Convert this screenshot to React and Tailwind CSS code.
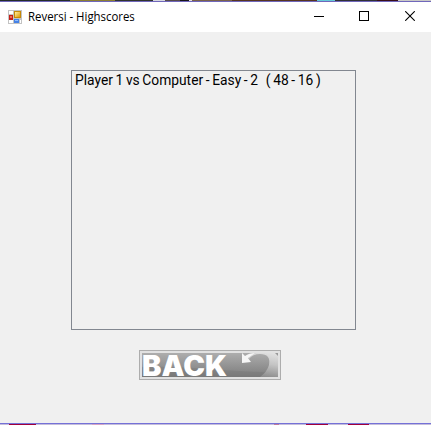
import React from "react";

function AppIcon() {
  return (
    <svg width="14" height="14" viewBox="0 0 14 14" shapeRendering="crispEdges">
      <defs>
        <linearGradient id="gold" x1="0" y1="0" x2="1" y2="1">
          <stop offset="0" stopColor="#fff0a0" />
          <stop offset="1" stopColor="#dc9a08" />
        </linearGradient>
      </defs>
      <rect width="14" height="14" fill="#c3c3c3" />
      <path d="M1 1h4v3H1zM1 10h4v3H1zM12 10h1v3h-1z" fill="#fff" />
      <rect x="1" y="5" width="4" height="5" fill="#c41f18" />
      <rect x="2" y="6" width="2" height="2" fill="#ef6a58" />
      <rect x="6" y="1" width="7" height="7" fill="#c68a08" />
      <rect x="7" y="2" width="5" height="5" fill="url(#gold)" />
      <rect x="6" y="9" width="5" height="4" fill="#4682e6" />
      <rect x="7" y="10" width="3" height="1" fill="#8dbcff" />
    </svg>
  );
}

function WindowControls() {
  return (
    <div className="-mr-[2px] ml-auto flex h-7 self-start">
      <span className="flex w-[45px] items-center justify-center">
        <svg width="10" height="10" shapeRendering="crispEdges"><path d="M0 5.5h10" stroke="#000" /></svg>
      </span>
      <span className="flex w-[46px] items-center justify-center">
        <svg width="10" height="10" shapeRendering="crispEdges"><path d="M.5.5h9v9h-9z" fill="none" stroke="#000" /></svg>
      </span>
      <span className="flex w-[46px] items-center justify-center">
        <svg width="10" height="10"><path d="M.2.2l9.6 9.6M9.8.2L.2 9.8" stroke="#000" strokeWidth="1.1" /></svg>
      </span>
    </div>
  );
}

function BackButton() {
  return (
    <button className="flex h-[30px] w-[142px] border border-[#adadad] bg-[#e1e1e1] p-[2px]">
      <span className="relative block h-6 w-[136px]">
        <svg className="absolute inset-0" width="136" height="24">
          <defs>
            <linearGradient id="face" x1="0" y1="0" x2="0" y2="1">
              <stop offset="0" stopColor="#adadad" />
              <stop offset="1" stopColor="#7c7c7c" />
            </linearGradient>
            <linearGradient id="arrow" x1="0.75" y1="0" x2="0.55" y2="1">
              <stop offset="0" stopColor="#e0e0e0" />
              <stop offset="0.45" stopColor="#c4c4c4" />
              <stop offset="1" stopColor="#8c8c8c" />
            </linearGradient>
          </defs>
          <rect width="136" height="24" fill="url(#face)" />
          <path d="M0 14C45 13 80 18 136 20V24H0Z" fill="#747474" opacity=".35" />
          <path d="M106 4Q110 0 114 0H136V24H118Q125 19 127 12Q129 1 118 1Q111 1 107 6Z" fill="url(#arrow)" />
          <path d="M133 0h3v3Z" fill="#999" />
          <path d="M100 0L103 3Q107 0 113 0L106 5L109 9L100 10Z" fill="#f6f6f6" />
        </svg>
        <span className="absolute -top-[3px] left-0 origin-left scale-x-[1.04] whitespace-nowrap font-['Inter','Liberation_Sans',sans-serif] text-[28px] font-black leading-8 text-white">BACK</span>
      </span>
    </button>
  );
}

export default function App() {
  return (
    <div className="flex h-[425px] w-[431px] flex-col overflow-hidden bg-[#f0f0f0] text-black">
      <div className="flex h-px shrink-0 bg-[#65462f]">
        <i className="w-[70px] bg-[#242c28]" />
        <i className="w-[45px] bg-[#8c7e31]" />
        <i className="w-[38px] bg-[#30342d]" />
        <i className="w-3 bg-[#d6d7e0]" />
        <i className="w-[15px] bg-[#554a4a]" />
        <i className="w-[9px] bg-[#181519]" />
        <i className="w-[3px] bg-[#e1dde2]" />
        <i className="w-10 bg-[#79614a]" />
        <i className="w-[85px] bg-[#573520]" />
        <i className="w-[18px] bg-[#64c8d8]" />
        <i className="w-[42px] bg-[#303035]" />
        <i className="w-[21px] bg-[#390e19]" />
        <i className="flex-1 bg-[#c9c9c6]" />
      </div>
      <div className="h-px shrink-0 bg-[#7067bb]" />
      <header className="flex h-[30px] shrink-0 items-center bg-white pl-2">
        <AppIcon />
        <h1 className="ml-[6px] origin-left scale-x-[0.95] whitespace-nowrap font-['Open_Sans','Noto_Sans',sans-serif] text-[12px] leading-4">Reversi - Highscores</h1>
        <WindowControls />
      </header>
      <main className="flex flex-1 flex-col pl-[71px] pt-[38px]">
        <div className="h-[260px] w-[285px] border border-[#828790] pl-[3px] pt-px">
          <p className="whitespace-pre font-['Roboto','Liberation_Sans',sans-serif] text-[13.8px] leading-4 [word-spacing:-0.8px]">Player 1 vs Computer - Easy - 2   ( 48 - 16 )</p>
        </div>
        <div className="ml-[68px] mt-5 flex"><BackButton /></div>
      </main>
      <div className="h-px shrink-0 bg-[#7471d8]" />
      <div className="flex h-px shrink-0 bg-[#c4bddb]">
        <i className="ml-[9px] w-[27px] bg-[#a0003c]" />
        <i className="ml-[56px] w-[12px] bg-[#d6a5c5]" />
        <i className="ml-[170px] w-[5px] bg-[#bd7b9f]" />
        <i className="ml-[27px] w-[22px] bg-[#a0003c]" />
        <i className="ml-[20px] w-[21px] bg-[#a0003c]" />
      </div>
    </div>
  );
}
